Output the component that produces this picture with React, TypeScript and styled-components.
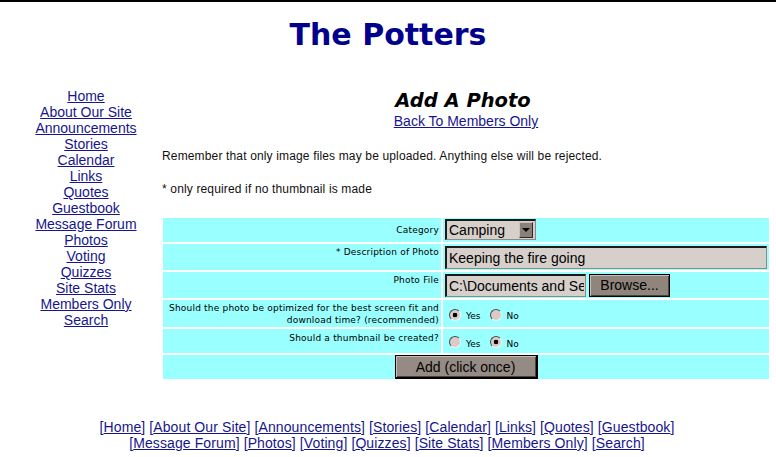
import styled, { createGlobalStyle } from 'styled-components';

const GlobalStyle = createGlobalStyle`
  body {
    margin: 0;
    background: #fff;
    font-family: "Liberation Sans", Arial, sans-serif;
    color: #000;
  }
`;

const navItems = [
  'Home',
  'About Our Site',
  'Announcements',
  'Stories',
  'Calendar',
  'Links',
  'Quotes',
  'Guestbook',
  'Message Forum',
  'Photos',
  'Voting',
  'Quizzes',
  'Site Stats',
  'Members Only',
  'Search',
];

const footerFirst = navItems.slice(0, 8);
const footerSecond = navItems.slice(8);

const Page = styled.div`
  border-top: 2px solid #000;
  min-height: 455px;
`;

const Title = styled.h1`
  margin: 0;
  padding-top: 15px;
  font-family: "DejaVu Sans", Verdana, sans-serif;
  font-size: 30px;
  line-height: 36px;
  font-weight: bold;
  text-align: center;
  color: #00008c;
`;

const Body = styled.div`
  display: flex;
  align-items: flex-start;
  margin-top: 35px;
  padding-left: 10px;
`;

const Nav = styled.nav`
  width: 152px;
  display: flex;
  flex-direction: column;
  align-items: center;
  font-size: 14px;
  line-height: 16px;
`;

const NavLink = styled.a`
  color: #16168c;
  text-decoration: underline;
`;

const Main = styled.main`
  width: 608px;
  padding-top: 3px;
`;

const Heading = styled.h2`
  margin: 0;
  font-family: "DejaVu Sans", Verdana, sans-serif;
  font-size: 19.5px;
  line-height: 20px;
  font-weight: bold;
  font-style: italic;
  text-align: center;
  padding-right: 6px;
`;

const BackLine = styled.div`
  margin-top: 2px;
  text-align: center;
  font-size: 14px;
  line-height: 16px;
`;

const Notice = styled.p<{ $gap: number }>`
  margin: ${(p) => p.$gap}px 0 0;
  font-size: 12px;
  line-height: 14px;
  letter-spacing: 0.15px;
  color: #111;
`;

const Form = styled.form`
  display: grid;
  grid-template-columns: 278px 326px;
  grid-template-rows: 24px 26px 26px 27px 24px 24px;
  gap: 2px;
  width: 606px;
  margin: 22px 0 0 1px;
`;

const LabelCell = styled.div<{ $top?: number }>`
  background: #99ffff;
  text-align: right;
  padding: ${(p) => p.$top ?? 2}px 2px 0 6px;
  font-family: "DejaVu Sans", Verdana, sans-serif;
  font-size: 9px;
  line-height: 12px;
  letter-spacing: 0.2px;
`;

const ValueCell = styled.div`
  background: #99ffff;
  display: flex;
  align-items: center;
  padding-left: 2px;
`;

const FullCell = styled.div`
  grid-column: 1 / -1;
  background: #99ffff;
  display: flex;
  justify-content: center;
`;

const SelectBox = styled.div`
  display: flex;
  align-items: center;
  width: 91px;
  height: 21px;
  box-sizing: border-box;
  border-style: solid;
  border-width: 2px 1px 1px 2px;
  border-color: #1a1a1a #8f8a86 #8f8a86 #1a1a1a;
  background: #d6cfca;
  align-self: flex-start;
  margin-top: 1px;
`;

const SelectText = styled.span`
  flex: 1;
  padding-left: 2px;
  font-size: 14px;
  line-height: 17px;
`;

const ArrowButton = styled.span`
  display: flex;
  align-items: center;
  justify-content: center;
  width: 14px;
  height: 16px;
  margin-right: 2px;
  box-sizing: border-box;
  background: #8a8078;
  border: 1px solid;
  border-color: #c9c1bb #2a2a2a #2a2a2a #c9c1bb;

  &::after {
    content: '';
    width: 0;
    height: 0;
    border-left: 4px solid transparent;
    border-right: 4px solid transparent;
    border-top: 4px solid #000;
  }
`;

const TextInput = styled.input<{ $width: number }>`
  width: ${(p) => p.$width}px;
  height: 23px;
  box-sizing: border-box;
  margin: 0;
  padding: 0 1px 0 2px;
  border-style: solid;
  border-width: 2px 1px 1px 2px;
  border-color: #1a1a1a #8f8a86 #8f8a86 #1a1a1a;
  background: #d6cfca;
  font-family: "Liberation Sans", Arial, sans-serif;
  font-size: 14px;
  color: #000;
  outline: none;
`;

const GrayButton = styled.button<{ $width: number }>`
  width: ${(p) => p.$width}px;
  height: 24px;
  box-sizing: border-box;
  margin: 0;
  padding: 0;
  border: 1px solid #000;
  box-shadow: inset 1px 1px 0 #c8beb6, inset -1px -1px 0 #4a423c;
  background: #8f857d;
  font-family: "Liberation Sans", Arial, sans-serif;
  font-size: 14px;
  color: #000;
`;

const BrowseButton = styled(GrayButton)`
  height: 23px;
  margin-left: 3px;
`;

const SubmitButton = styled(GrayButton)`
  background: #958b84;
  border-width: 1px 2px 2px 1px;
`;

const RadioGroup = styled.div`
  display: flex;
  align-items: center;
  padding-left: 4px;
  font-family: "DejaVu Sans", Verdana, sans-serif;
  font-size: 9px;
  padding-top: 2px;
`;

const Radio = styled.input.attrs({ type: 'radio' })`
  appearance: none;
  width: 12px;
  height: 12px;
  margin: 0 5px 0 0;
  border-radius: 50%;
  border: 1px solid;
  border-color: #4a4a4a #f2f2f2 #f2f2f2 #4a4a4a;
  background: #d9cbc7;
  box-sizing: border-box;

  &:checked {
    background: radial-gradient(circle at center, #000 0 2px, #d9cbc7 2.6px);
  }
`;

const RadioLabel = styled.span`
  margin-right: 9px;
  padding-top: 3px;
`;

const Footer = styled.footer`
  margin-top: 40px;
  font-size: 14px;
  line-height: 16px;
  letter-spacing: 0.1px;
  color: #16168c;
  text-align: center;
  padding-right: 2px;
`;

function YesNo({ name, yes }: { name: string; yes: boolean }) {
  return (
    <RadioGroup>
      <Radio name={name} defaultChecked={yes} />
      <RadioLabel>Yes</RadioLabel>
      <Radio name={name} defaultChecked={!yes} />
      <RadioLabel>No</RadioLabel>
    </RadioGroup>
  );
}

function FooterLine({ items }: { items: string[] }) {
  return (
    <div>
      {items.map((item, i) => (
        <span key={item}>
          [<NavLink href="#">{item}</NavLink>]{i < items.length - 1 ? ' ' : ''}
        </span>
      ))}
    </div>
  );
}

export default function App() {
  return (
    <Page>
      <GlobalStyle />
      <Title>The Potters</Title>
      <Body>
        <Nav>
          {navItems.map((item) => (
            <NavLink key={item} href="#">
              {item}
            </NavLink>
          ))}
        </Nav>
        <Main>
          <Heading>Add A Photo</Heading>
          <BackLine>
            <NavLink href="#">Back To Members Only</NavLink>
          </BackLine>
          <Notice $gap={20}>
            Remember that only image files may be uploaded. Anything else will be rejected.
          </Notice>
          <Notice $gap={19}>* only required if no thumbnail is made</Notice>
          <Form onSubmit={(e) => e.preventDefault()}>
            <LabelCell $top={6}>Category</LabelCell>
            <ValueCell>
              <SelectBox>
                <SelectText>Camping</SelectText>
                <ArrowButton />
              </SelectBox>
            </ValueCell>
            <LabelCell>* Description of Photo</LabelCell>
            <ValueCell>
              <TextInput $width={322} defaultValue="Keeping the fire going" />
            </ValueCell>
            <LabelCell>Photo File</LabelCell>
            <ValueCell>
              <TextInput $width={141} defaultValue="C:\Documents and Settings" />
              <BrowseButton type="button" $width={81}>
                Browse...
              </BrowseButton>
            </ValueCell>
            <LabelCell>
              Should the photo be optimized for the best screen fit and
              <br />
              download time? (recommended)
            </LabelCell>
            <ValueCell>
              <YesNo name="optimize" yes />
            </ValueCell>
            <LabelCell $top={3}>Should a thumbnail be created?</LabelCell>
            <ValueCell>
              <YesNo name="thumb" yes={false} />
            </ValueCell>
            <FullCell>
              <SubmitButton type="submit" $width={143}>
                Add (click once)
              </SubmitButton>
            </FullCell>
          </Form>
        </Main>
      </Body>
      <Footer>
        <FooterLine items={footerFirst} />
        <FooterLine items={footerSecond} />
      </Footer>
    </Page>
  );
}
